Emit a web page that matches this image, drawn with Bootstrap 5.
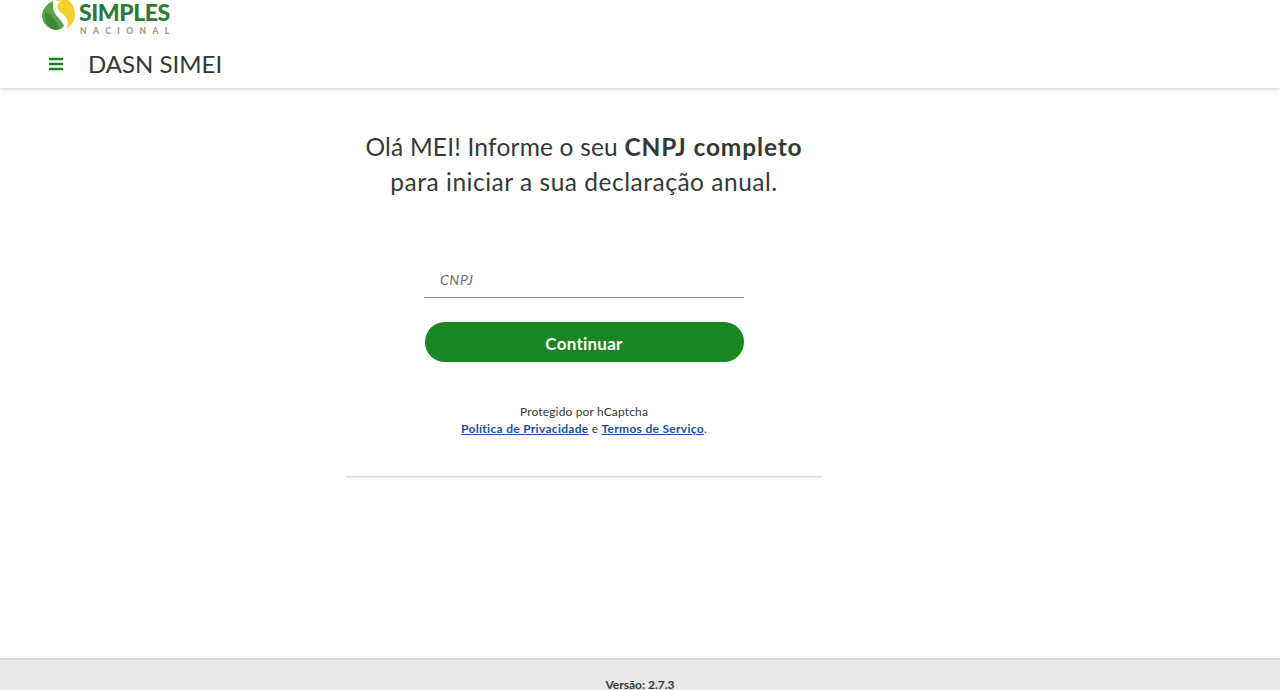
<!DOCTYPE html>
<html lang="pt-BR">
<head>
<meta charset="utf-8">
<title>DASN SIMEI</title>
<link rel="stylesheet" href="https://cdn.jsdelivr.net/npm/bootstrap@5.3.0/dist/css/bootstrap.min.css">
<style>
html,body{height:690px;overflow:hidden}
body{font-family:"Lato","Liberation Sans",sans-serif;color:#333a35;background:#fff}
.page-shell{height:690px}
.top-bar{height:88px;box-shadow:0 1px 4px rgba(0,0,0,.22);flex:none;position:relative;z-index:1}
.brand-row{height:42px;padding-left:42px}
.brand-row svg{overflow:visible}
.logo-word{font-family:"Lato",sans-serif;font-weight:900;font-size:23px;fill:#2c7a35;letter-spacing:-.45px}
.logo-sub{font-family:"Lato",sans-serif;font-weight:900;font-size:8.5px;fill:#9c9c82;letter-spacing:6.4px}
.title-row{height:46px;padding-left:48px}
.menu-icon{width:16px;height:14px;margin-right:24px;border:0;background:none;padding:0;display:block;margin-top:-2px}
.app-title{font-size:24px;line-height:1;color:#333a35;margin:0;font-weight:400;margin-top:-2px}
.content-zone{padding-right:112px}
.content-col{width:476px}
.intro{font-size:24.5px;line-height:35px;padding-top:41px;margin:0 0 63px;letter-spacing:.2px}
.intro strong{font-weight:700;letter-spacing:.85px}
.intro-next{letter-spacing:.52px}
.field-wrap{width:320px}
.cnpj-field{border:0;border-bottom:1px solid #80868b;border-radius:0;height:36px;padding:0 16px;font-size:14px;font-style:italic;letter-spacing:.6px;width:100%;display:block;outline:0;color:#333}
.cnpj-field::placeholder{color:#6b6f73;opacity:1}
.go-btn{display:block;margin:24px auto 0;width:319px;height:40px;border-radius:20px;background:#1a8622;border:0;color:#fff;font-weight:700;font-size:17px;padding:4px 0 0;letter-spacing:.25px}
.captcha-note{font-size:12px;line-height:17px;margin-top:41px;margin-bottom:39px;color:#333a35;letter-spacing:.15px}
.captcha-note a{color:#1b4ea0;font-weight:700;letter-spacing:.3px}
.rule-line{height:1px;background:#dcdcdc;box-shadow:0 1px 1px rgba(0,0,0,.08)}
.site-foot{height:32px;flex:none;background:#e7e7e7;border-top:2px solid #d6d6d6;padding-top:20px;font-size:12px;font-weight:700;line-height:10px;text-align:center;color:#333a35}
</style>
</head>
<body>
<div class="page-shell d-flex flex-column">
  <header class="top-bar bg-white">
    <div class="brand-row d-flex align-items-start">
      <svg width="132" height="36" viewBox="0 0 132 36" role="img" aria-label="Simples Nacional">
        <path d="M11 1C4 4 0 10 0 16c0 7 6 13 14 14 3 0 6-1 8-4C20 20 12 15 11 8z" fill="#5ba445"/>
        <path d="M3 13c5 0 10 6 14 15-1 1-2 2-3 2C7 29 2 23 3 13z" fill="#3d8a3a"/>
        <path d="M12 0h14c5 4 7 9 7 14 0 7-4 12-9 15 3-5 2-10-2-14-4-3-8-6-6-11 1-2 3-3 5-3-3 0-6 0-9-1z" fill="#f7cf2b"/>
        <path d="M14 31c5 1 10 0 14-3l-3 2c-3 2-7 2-11 1z" fill="#ddd"/>
        <text class="logo-word" x="37" y="21">SIMPLES</text>
        <text class="logo-sub" x="38" y="34">NACIONAL</text>
      </svg>
    </div>
    <div class="title-row d-flex align-items-center">
      <button class="menu-icon" type="button" aria-label="Menu">
        <svg width="16" height="14" viewBox="0 0 16 14" class="d-block"><path d="M1 2h14M1 7h14M1 12h14" stroke="#1a7d2a" stroke-width="2.4" fill="none"/></svg>
      </button>
      <h1 class="app-title">DASN SIMEI</h1>
    </div>
  </header>
  <main class="content-zone flex-grow-1 d-flex justify-content-center">
    <div class="content-col text-center">
      <p class="intro">Olá MEI! Informe o seu <strong>CNPJ completo</strong><br><span class="intro-next">para iniciar a sua declaração anual.</span></p>
      <form class="field-wrap mx-auto" onsubmit="return false">
        <input class="cnpj-field" type="text" placeholder="CNPJ" aria-label="CNPJ">
        <button class="go-btn" type="submit">Continuar</button>
      </form>
      <p class="captcha-note">Protegido por hCaptcha<br><a href="#">Política de Privacidade</a> e <a href="#">Termos de Serviço</a>.</p>
      <div class="rule-line"></div>
    </div>
  </main>
  <footer class="site-foot">Versão: 2.7.3</footer>
</div>
<script src="https://cdn.jsdelivr.net/npm/bootstrap@5.3.0/dist/js/bootstrap.bundle.min.js"></script>
</body>
</html>
